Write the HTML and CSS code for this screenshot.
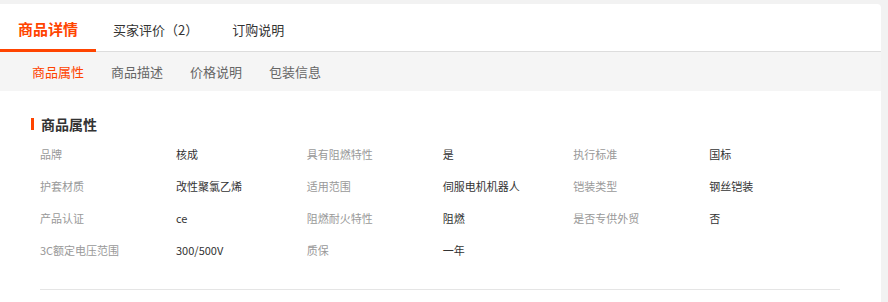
FILE: index.html
```html
<!DOCTYPE html>
<html lang="zh-CN">

<head>
    <meta charset="UTF-8">
    <meta name="viewport" content="width=device-width, initial-scale=1.0">
    <title>商品详情</title>
    <link rel="stylesheet" href="styles.css">
</head>

<body>
    <div class="detail-card">
        <div class="main-tabs">
            <div class="main-tab active">商品详情</div>
            <div class="main-tab">买家评价（2）</div>
            <div class="main-tab">订购说明</div>
        </div>

        <div class="sub-tabs">
            <div class="sub-tab active">商品属性</div>
            <div class="sub-tab">商品描述</div>
            <div class="sub-tab">价格说明</div>
            <div class="sub-tab">包装信息</div>
        </div>

        <div class="attr-section">
            <h3 class="section-title">商品属性</h3>

            <div class="attr-grid">
                <div class="attr"><span class="attr-name">品牌</span><span class="attr-value">核成</span></div>
                <div class="attr"><span class="attr-name">具有阻燃特性</span><span class="attr-value">是</span></div>
                <div class="attr"><span class="attr-name">执行标准</span><span class="attr-value">国标</span></div>

                <div class="attr"><span class="attr-name">护套材质</span><span class="attr-value">改性聚氯乙烯</span></div>
                <div class="attr"><span class="attr-name">适用范围</span><span class="attr-value">伺服电机机器人</span></div>
                <div class="attr"><span class="attr-name">铠装类型</span><span class="attr-value">钢丝铠装</span></div>

                <div class="attr"><span class="attr-name">产品认证</span><span class="attr-value">ce</span></div>
                <div class="attr"><span class="attr-name">阻燃耐火特性</span><span class="attr-value">阻燃</span></div>
                <div class="attr"><span class="attr-name">是否专供外贸</span><span class="attr-value">否</span></div>

                <div class="attr"><span class="attr-name">3C额定电压范围</span><span class="attr-value">300/500V</span></div>
                <div class="attr"><span class="attr-name">质保</span><span class="attr-value">一年</span></div>
            </div>

            <div class="divider"></div>
        </div>
    </div>
</body>

</html>
```

FILE: styles.css
```css
body {
    font-family: "Noto Sans CJK SC", "Noto Sans", sans-serif;
    background-color: #f2f2f2;
    margin: 0;
    padding: 4px 0 0;
}

.detail-card {
    width: 881px;
    background-color: #fff;
    border-top-right-radius: 4px;
    min-height: 298px;
}

.main-tabs {
    display: flex;
    height: 48px;
    border-bottom: 1px solid #ddd;
    box-sizing: border-box;
}

.main-tab {
    display: flex;
    align-items: center;
    padding: 3px 17px 0;
    font-size: 13px;
    color: #333;
}

.main-tab.active {
    padding: 3px 18px 0;
    font-size: 15px;
    font-weight: bold;
    color: #ff4400;
    border-bottom: 3px solid #ff4400;
    margin-bottom: -1px;
}

.sub-tabs {
    display: flex;
    gap: 27px;
    height: 39px;
    align-items: center;
    padding-left: 32px;
    background-color: #f5f5f5;
}

.sub-tab {
    font-size: 13px;
    color: #666;
}

.sub-tab.active {
    color: #ff4400;
}

.attr-section {
    padding: 23px 41px 0 40px;
}

.section-title {
    display: flex;
    align-items: center;
    margin: 0 0 4px -9px;
    height: 20px;
    font-size: 14px;
    color: #333;
}

.section-title::before {
    content: "";
    width: 3px;
    height: 12px;
    margin-right: 7px;
    background-color: #ff4400;
}

.attr-grid {
    display: grid;
    grid-template-columns: repeat(3, 1fr);
}

.attr {
    display: flex;
    align-items: center;
    height: 32px;
    font-size: 11px;
}

.attr-name {
    width: 136px;
    color: #999;
}

.attr-value {
    color: #333;
}

.divider {
    margin-top: 23px;
    height: 1px;
    background-color: #e5e5e5;
}
```
